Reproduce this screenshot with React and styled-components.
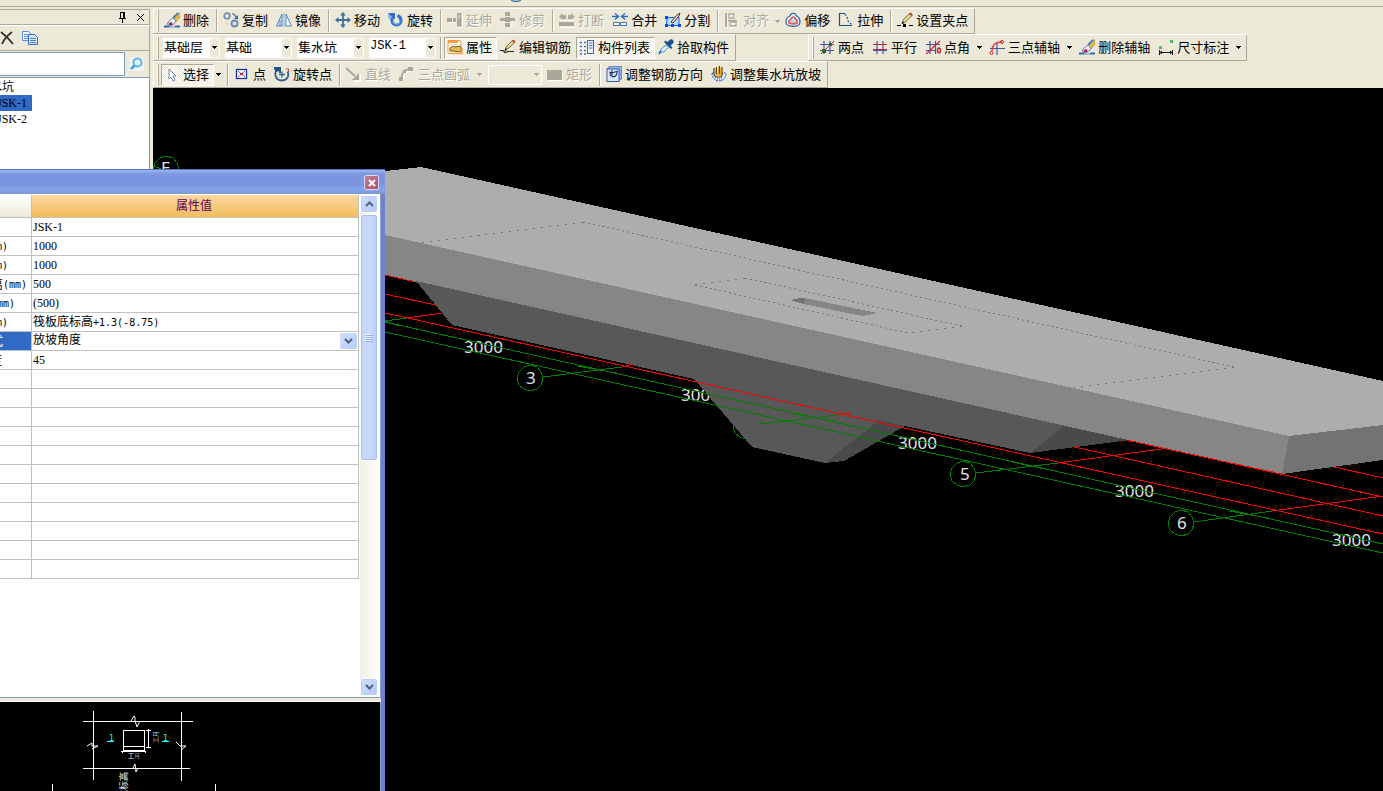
import React from "react";
import styled, { createGlobalStyle, css } from "styled-components";

const face = "#ece9d8";
const shade = "#aca899";
const fieldEdge = "#7f9db9";
const cjk = '"Noto Sans CJK SC", sans-serif';
const mixed = '"Liberation Serif", "Noto Sans CJK SC", serif';

const Base = createGlobalStyle`
  * { box-sizing: border-box; }
  body { margin: 0; background: ${face}; font: 13px/16px ${cjk}; color: #000; overflow: hidden; }
  button, select, input { font: inherit; color: inherit; margin: 0; padding: 0; border: 0; background: none; border-radius: 0; }
`;

const Screen = styled.div`
  position: relative;
  display: flex;
  flex-direction: column;
  height: 100vh;
  overflow: hidden;
`;

const TopStrip = styled.div`
  flex: none;
  display: flex;
  height: 8px;
  padding-left: 510px;
  border-bottom: 1px solid ${face};
  box-shadow: inset 0 -1px ${shade};
`;

const Workspace = styled.div`
  flex: 1;
  display: flex;
  gap: 3px;
  min-height: 0;
`;

/* ---------- docked component list ---------- */
const Dock = styled.aside`
  flex: none;
  width: 150px;
  display: flex;
  flex-direction: column;
  padding-top: 1px;
`;
const DockTitle = styled.div`
  display: flex;
  align-items: center;
  justify-content: flex-end;
  gap: 9px;
  height: 16px;
  padding-right: 4px;
  border: 1px solid ${shade};
  border-left: 0;
`;
const DockTools = styled.div`
  display: flex;
  align-items: center;
  gap: 8px;
  height: 26px;
  border-top: 1px solid #fff;
  border-bottom: 1px solid ${shade};
  border-right: 1px solid ${shade};
`;
const SearchRow = styled.form`
  display: flex;
  align-items: center;
  gap: 4px;
  height: 26px;
  border-right: 1px solid ${shade};
`;
const SearchInput = styled.input`
  width: 125px;
  height: 24px;
  background: #fff;
  border: 1px solid ${fieldEdge};
  border-left: 0;
  outline: 0;
`;
const IconButton = styled.button`
  display: flex;
  align-items: center;
  justify-content: center;
  flex: none;
`;
const Tree = styled.ul`
  flex: 1;
  margin: 0;
  padding: 1px 0 0;
  list-style: none;
  background: #fff;
  border: 1px solid ${fieldEdge};
  border-left: 0;
  font: 12px/16px ${mixed};
`;
const TreeItem = styled.li`
  display: flex;
  justify-content: flex-end;
  width: ${(p) => p.$w}px;
  height: 16px;
  padding-right: ${(p) => p.$pad || 0}px;
  overflow: hidden;
  white-space: nowrap;
  background: ${(p) => (p.$on ? "#316ac5" : "none")};
`;

/* ---------- toolbars ---------- */
const Main = styled.main`
  flex: 1;
  min-width: 0;
  display: flex;
  flex-direction: column;
`;
const BarRow = styled.div`
  flex: none;
  display: flex;
  gap: 72px;
  height: ${(p) => p.$h || 27}px;
`;
const Bar = styled.div`
  display: flex;
  align-items: center;
  flex: none;
  padding: 0 1px 0 3px;
  border: 1px solid;
  border-color: #fff ${shade} ${shade} #fff;
`;
const Grip = styled.span`
  width: 2px;
  height: 22px;
  margin-right: 2px;
  background: linear-gradient(90deg, #fff 50%, ${shade} 50%);
`;
const Rule = styled.span`
  width: 6px;
  height: 22px;
  background: linear-gradient(90deg, transparent 2px, ${shade} 2px, ${shade} 3px, #fff 3px, #fff 4px, transparent 4px);
`;
const ToolButton = styled.button`
  display: flex;
  align-items: center;
  gap: 3px;
  height: 22px;
  padding: 0 4px 2px 2px;
  border: 1px solid transparent;
  white-space: nowrap;
  ${(p) =>
    p.$pressed &&
    css`
      border-color: ${shade} #fff #fff ${shade};
      background: repeating-conic-gradient(#fff 0 25%, ${face} 0 50%) 0 0 / 2px 2px;
    `}
  &:disabled {
    color: ${shade};
    text-shadow: 1px 1px #fff;
  }
`;
const DropButton = styled.button`
  display: flex;
  align-items: center;
  justify-content: center;
  width: ${(p) => (p.$tight ? 8 : 11)}px;
  height: 22px;
  padding-right: 2px;
  color: ${(p) => (p.disabled ? shade : "#000")};
`;
const Combos = styled.div`
  display: flex;
  gap: 5px;
  padding: 0 2px;
`;
const ComboBox = styled.div`
  display: flex;
  align-items: center;
  width: ${(p) => p.$w}px;
  height: 20px;
  border: 1px solid #fff;
  background: ${face};
  color: ${(p) => (p.$empty ? shade : "#000")};
  svg { margin: 0 2px; }
`;
const ComboSelect = styled.select`
  flex: 1;
  min-width: 0;
  height: 18px;
  padding: 0 0 4px;
  appearance: none;
  outline: 0;
  opacity: 1;
  background: ${(p) => (p.disabled ? face : "#fff")};
  ${(p) => p.$latin && css`font: 12px "Liberation Mono", monospace;`}
`;
const Glyph = styled.svg.attrs({ width: 16, height: 16, viewBox: "0 0 16 16", "aria-hidden": true, fill: "none" })`
  flex: none;
`;
const Canvas = styled.div`
  flex: 1;
  min-height: 0;
  background: #000;
  svg { display: block; width: 100%; height: 100%; }
`;

/* ---------- property window ---------- */
const PropertyWindow = styled.section`
  position: absolute;
  left: 0;
  top: 169px;
  bottom: 0;
  width: 385px;
  display: flex;
  flex-direction: column;
  background: #fff;
  border-right: 4px solid #6f7fd8;
  box-shadow: inset -1px 0 #8aa3c4;
`;
const WindowTitle = styled.header`
  flex: none;
  display: flex;
  align-items: center;
  justify-content: flex-end;
  height: 25px;
  margin-right: -4px;
  padding: 2px 6px 0 0;
  border-top: 1px solid #5570c8;
  border-bottom: 1px solid ${fieldEdge};
  background: linear-gradient(#9ab8f0, #7c98e0 4px, #7a94df 14px, #84a6ec 20px, #7d9ae0);
`;
const CloseButton = styled.button`
  display: flex;
  align-items: center;
  justify-content: center;
  width: 15px;
  height: 15px;
  border: 1px solid #d8d8f0;
  border-radius: 2px;
  background: linear-gradient(135deg, #c08098, #a8526a);
`;
const Sheet = styled.div`
  flex: 1;
  min-height: 0;
  display: flex;
  justify-content: space-between;
  padding: 1px 3px 1px 0;
  border-bottom: 1px solid ${fieldEdge};
`;
const Grid = styled.table`
  align-self: flex-start;
  width: 359px;
  table-layout: fixed;
  border-collapse: separate;
  border-spacing: 0;
  font: 12px/16px ${mixed};
`;
const NameHead = styled.th`
  width: 32px;
  height: 23px;
  padding: 0;
  background: linear-gradient(#fff, ${face});
  border: solid #c0c0c0;
  border-width: 0 1px 1px 0;
`;
const ValueHead = styled.th`
  height: 23px;
  padding: 0 2px 0 0;
  font-weight: 400;
  color: #5a0060;
  background: linear-gradient(#fad79f, #f2bc5c);
  border: solid #c0c0c0;
  border-width: 0 1px 1px 0;
`;
const Cell = styled.td`
  height: 19px;
  padding: 0 0 0 1px;
  border: solid #c0c0c0;
  border-width: 0 1px 1px 0;
  white-space: nowrap;
`;
const NameCell = styled(Cell)`
  padding: 0;
  background: ${(p) => (p.$on ? "#316ac5" : "#fff")};
  color: ${(p) => (p.$on ? "#fff" : "#000")};
`;
const NameText = styled.span`
  display: flex;
  justify-content: flex-end;
  width: ${(p) => p.$w}px;
  height: 18px;
  padding-top: 2px;
  overflow: hidden;
`;
const Fixed = styled.span`
  font: 10px/16px "DejaVu Sans Mono", monospace;
`;
const ValueSelect = styled.div`
  display: flex;
  align-items: center;
  height: 18px;
  padding-right: 1px;
  select { flex: 1; height: 18px; appearance: none; outline: 0; padding-bottom: 2px; }
`;
const ArrowFace = styled.span`
  display: flex;
  align-items: center;
  justify-content: center;
  flex: none;
  width: 17px;
  height: 16px;
  border-radius: 2px;
  background: linear-gradient(135deg, #d3e0fd, #b4cbfa);
`;
const ScrollBar = styled.div`
  display: flex;
  flex-direction: column;
  width: 18px;
  background: linear-gradient(90deg, #f0eee6, #fefefb);
`;
const ScrollButton = styled.button`
  display: flex;
  align-items: center;
  justify-content: center;
  height: 18px;
  border: 1px solid #fff;
  border-radius: 3px;
  background: linear-gradient(135deg, #d0defd, #b2c9fa);
  box-shadow: inset 0 0 0 1px #bccdf5;
`;
const Thumb = styled.div`
  display: flex;
  align-items: center;
  justify-content: center;
  height: 247px;
  margin: 1px 0 auto;
  border: 1px solid #fff;
  border-radius: 3px;
  background: linear-gradient(90deg, #c6d6fc, #cadafe 60%, #b6cdf9);
  box-shadow: inset 0 0 0 1px #a8bef2;
`;
const Splitter = styled.div`
  flex: none;
  height: 4px;
  background: ${face};
  border-bottom: 1px solid #fff;
`;
const Preview = styled.div`
  flex: none;
  height: 89px;
  margin-right: 1px;
  background: #000;
  svg { display: block; }
`;

/* ---------- icons ---------- */
const Down = () => (
  <svg width="5" height="3" viewBox="0 0 5 3" aria-hidden="true" shapeRendering="crispEdges">
    <path d="M0 0h5v1H4v1H3v1H2V2H1V1H0z" fill="currentColor" />
  </svg>
);
const Chevron = ({ up }) => (
  <svg width="9" height="6" viewBox="0 0 9 6" aria-hidden="true">
    <path d={up ? "M1 5l3.5-3.5L8 5" : "M1 1l3.5 3.5L8 1"} fill="none" stroke="#4d6185" strokeWidth="2" />
  </svg>
);
const brush = (
  <>
    <path d="M0 14.500h5M11 14.500h5" stroke="#2f6aa8" strokeWidth="2" />
    <path d="M5 15h6" stroke="#8fb0d4" strokeWidth="1.500" />
    <path d="M9 7l5-6h2v4l-4 5z" fill="#eab640" stroke="#9a8a5a" strokeWidth=".6" />
    <path d="M9 6l5-5" stroke="#4f7fb8" strokeWidth="1.800" />
    <path d="M5 9l4-3 3 3-2 3-4 2-3-2z" fill="#eef3fa" stroke="#54749c" strokeWidth=".8" />
    <path d="M4.500 11l3-1 1.500 2.500-3.500 1.500z" fill="#a8286c" />
  </>
);
const pencil = (
  <>
    <path d="M0 11.500h3l2 2 3-1h6" stroke="#222" strokeWidth="1.200" />
    <path d="M5 11l2-4 6-6 2 2-6 6z" fill="#ecd58a" stroke="#5a4a2a" strokeWidth=".8" />
    <path d="M12 2l1.500-1.500 2 2L14 4z" fill="#c84030" />
    <path d="M4.500 12l1-3 2 2z" fill="#222" />
  </>
);
const icons = {
  erase: brush,
  copy: (
    <>
      <circle cx="4" cy="4" r="2.800" stroke="#7288ac" strokeWidth="1.800" fill="#f2f5fb" />
      <circle cx="11.500" cy="11.500" r="3" stroke="#7288ac" strokeWidth="1.800" fill="#d5e0f2" />
      <path d="M9.500 1.500l2 1.500 2 2.500" stroke="#2f6aa0" strokeWidth="1.200" />
      <path d="M15 3v4h-4z" fill="#2f6aa0" />
      <path d="M3 10.500l2 2" stroke="#b5bccb" />
    </>
  ),
  mirror: (
    <>
      <path d="M6 2v12H.5z" stroke="#4d86bd" fill="#d8e8f6" />
      <path d="M10 2v12h5.500z" stroke="#4d86bd" fill="#f6fafd" />
      <path d="M8 1v14" stroke="#8fb2d4" />
      <path d="M4 8v6" stroke="#4d86bd" />
    </>
  ),
  move: (
    <>
      <path d="M8 2v12M2 8h12" stroke="#3f6f9f" strokeWidth="1.800" />
      <path d="M8 0l3 3.500H5zM8 16l-3-3.500h6zM0 8l3.500-3v6zM16 8l-3.500-3v6z" fill="#3f6f9f" />
    </>
  ),
  rotate: (
    <>
      <path d="M4 5v3.500a4.500 4.500 0 0 0 9 0c0-2-1.200-4-3.500-5" stroke="#3478d0" strokeWidth="3.200" />
      <path d="M5 9c1 4 6 4 7 0" stroke="#7fb4f0" strokeWidth="1.200" />
      <path d="M0 6V1h7v6z" fill="#2c6cc4" />
      <path d="M0 6V1l5 5z" fill="#8ab8ee" />
    </>
  ),
  extend: (
    <>
      <path d="M1 10.500h8M10 15.500h5.500V2" stroke="#fff" />
      <path d="M0 6h5v4H0zM6 6h3v4H6z" fill="#aca899" />
      <path d="M10 1h4.500v13.500H10z" fill="#aca899" />
      <path d="M12 3v4" stroke="#ece9d8" />
    </>
  ),
  trim: (
    <>
      <path d="M6 16.500h5V12h5" stroke="#fff" />
      <path d="M5 0h5v4h-5zM0 6h5V5h5v1h5v3h-5v1H5V9H0zM5 11h5v4H5z" fill="#aca899" />
    </>
  ),
  breakIt: (
    <>
      <path d="M1 15.500h15V11M2 8.500h5M10 8.500h5" stroke="#fff" />
      <path d="M0 4.500L3.500 1v2H7v4H3.500V8zM16 4.500L12.500 1v2H9v4h3.500V8zM0 10h15v4H0z" fill="#aca899" />
    </>
  ),
  merge: (
    <>
      <path d="M0 4.500h6M16 4.500h-6M3 1.500l3.500 3L3 7.500M13 1.500l-3.500 3 3.500 3" stroke="#2b6cc4" strokeWidth="1.400" />
      <path d="M1.500 10.500h6v3h-6zM8.500 10.500h6v3h-6z" fill="#fff" stroke="#3f6fb7" />
    </>
  ),
  split: (
    <>
      <path d="M2 5.500h12v8H1.500z" fill="#b4dcff" stroke="#1a63e8" />
      <path d="M0 4h3v3H0zM0 12h3v3H0zM13 12h3v3h-3zM6 12h3v3H6z" fill="#1546e0" />
      <path d="M6 10l6-7 3-2-1 3-6 7z" fill="#f0e2c0" stroke="#5a2b20" />
    </>
  ),
  align: (
    <>
      <path d="M2 1v14M5 2h5v3H5zM5 7h8M5 10.500h7v4H5z" stroke="#fff" transform="translate(1 1)" />
      <path d="M2 1v14" stroke="#aca899" strokeWidth="2" />
      <path d="M5 2h5v4H5zM4 8.500h9M6 10h6v4H6z" stroke="#aca899" strokeWidth="1.300" />
    </>
  ),
  offset: (
    <>
      <path d="M5 4c1-4 6-3 6.500 0 3 1 4 5 3 8-2 3-11 3-13 0C0 9 2 5 5 4z" fill="#f8fcff" stroke="#2d66a0" strokeWidth="1.300" />
      <path d="M6 7c1-3 4-2 4.500 0 2 1 2 2 1.500 4-1 1-7 1-8 0-.5-2 0-3 2-4z" fill="#c4dcf4" stroke="#e0625a" strokeWidth="1.800" />
    </>
  ),
  stretch: (
    <>
      <path d="M7 1.500H1.500v12H14" stroke="#1b5580" strokeWidth="1.200" />
      <path d="M7 2l2 3 1 4 4 4" stroke="#1b5580" strokeWidth="1.200" strokeDasharray="2 1.500" />
    </>
  ),
  gripPoint: (
    <>
      <path d="M5 12l1-4 7-7 2.500 2-7 7z" fill="#ecd58a" stroke="#5a5a4a" strokeWidth=".8" />
      <path d="M12 2l1.500-1.500 2 2L14 4z" fill="#c84030" />
      <path d="M5 12l.5-3 2 2z" fill="#222" />
      <path d="M0 13.500h4M12 13.500h4" stroke="#000" />
      <path d="M6 12h3v3H6z" fill="#000" />
    </>
  ),
  property: (
    <>
      <rect x="1" y="1.500" width="13" height="13" rx="1" fill="#fff9ec" stroke="#ee9a3c" />
      <path d="M1 1h10v3H1z" fill="#f59d40" />
      <path d="M4 5.500h6" stroke="#c8d4e8" />
      <path d="M3 9c2-2 3-2 5-1l5-1 2 4-3 2-6-1-3 0z" fill="#e0b84e" stroke="#6b5524" strokeWidth=".9" />
      <path d="M3 14.500h12V9" stroke="#f0a24c" strokeWidth="1.500" />
    </>
  ),
  rebar: pencil,
  list: (
    <>
      <path d="M1 3.500h2M1 7.500h2M1 11.500h2M1 15h2M5 3.500h2M5 7.500h2M5 11.500h2M5 15h2" stroke="#3a6fbe" strokeWidth="1.500" />
      <rect x="8.500" y="1.500" width="6" height="13" fill="#eaf2ff" stroke="#4468a8" />
      <path d="M10 4h3.500M10 6.500h3.500M10 9h3.500" stroke="#4468a8" />
    </>
  ),
  pick: (
    <>
      <path d="M2 13l1-3 5-4 2.500 2.500L6 13z" fill="#d4ecfa" stroke="#5a9cc4" />
      <path d="M6 3l7 7 1.500-1.500-2-2 2.500-2C17 2 14-1 11.500 1l-2 2-2-1.500z" fill="#1d4f92" />
      <path d="M1 15l2-3" stroke="#2d77bb" strokeWidth="2" />
    </>
  ),
  twoPoint: (
    <>
      <path d="M5 2v13M11 2v13M1 5.500h14M1 11.500h14" stroke="#4a52a4" strokeWidth="1.200" />
      <path d="M2 15L15 2" stroke="#c8202c" />
      <path d="M3 10h4v4H3zM10 4h3v3h-3z" fill="#2d6a22" />
    </>
  ),
  parallel: (
    <>
      <path d="M5 2v13M11 2v13M1 11.500h14" stroke="#4a52a4" strokeWidth="1.200" />
      <path d="M1 5.500h14M1 10.500h14" stroke="#d02430" strokeWidth="1.200" />
    </>
  ),
  angle: (
    <>
      <path d="M5 2v13M10.500 2v13M1 5.500h14M1 11.500h10" stroke="#4a52a4" strokeWidth="1.200" />
      <path d="M1 15L15 2" stroke="#d02430" strokeWidth="1.200" />
      <ellipse cx="14" cy="11.500" rx="1.500" ry="2.500" stroke="#d02430" strokeWidth="1.500" />
    </>
  ),
  arcAxis: (
    <>
      <path d="M8 3v13M1 9.500h15" stroke="#4a52a4" strokeWidth="1.200" />
      <path d="M3 12C3 6 6 3 13 3" stroke="#e04048" strokeWidth="1.500" />
      <circle cx="2.500" cy="14" r="1.500" stroke="#d02430" />
      <circle cx="13" cy="3" r="1.500" stroke="#d02430" />
    </>
  ),
  dimension: (
    <>
      <path d="M1 7h3v3H1zM12 1h3v3h-3z" fill="#4dbb58" />
      <path d="M1.500 11v5M14.500 11v5M2 13.500h12M4 12l-2 1.500L4 15M12 12l2 1.500-2 1.500" stroke="#111" />
    </>
  ),
  cursor: <path d="M5 3v10l2-2 2 4 2-1-2-4h3z" fill="#fff" stroke="#6c88ae" />,
  point: (
    <>
      <rect x="2.500" y="3.500" width="10" height="9" fill="#fff" stroke="#1c2f9c" strokeWidth="1.300" />
      <path d="M4 5l7 6M11 5l-7 6" stroke="#5f73c8" />
      <path d="M6 7h3v2H6z" fill="#d8202c" />
    </>
  ),
  rotatePoint: (
    <>
      <path d="M3 3.500C0 7 1 14 7.500 14.500c6 0 8-5 6-9" stroke="#345f8e" strokeWidth="1.800" />
      <path d="M8 5.500v6M5 8.500h6" stroke="#345f8e" strokeWidth="1.300" />
      <path d="M0 1h7v6H5V5L2 6 0 3z" fill="#22527e" />
      <path d="M12 3h2.500v3" stroke="#d04040" />
    </>
  ),
  line: (
    <>
      <path d="M2 3l9 9M14.500 8v7H8" stroke="#fff" strokeWidth="1.500" />
      <path d="M0 2l9 8" stroke="#aca899" strokeWidth="2.200" />
      <path d="M13 7v7H6z" fill="#aca899" />
    </>
  ),
  arc: (
    <>
      <path d="M4 15C3 8 7 5 13 4.500" stroke="#fff" strokeWidth="2" />
      <path d="M2.500 14C2 8 5 3 12 3" stroke="#aca899" strokeWidth="2" />
      <path d="M0 11h4v4H0zM9 1h5v4H9zM4 4h3v3H4z" fill="#aca899" />
    </>
  ),
  rect: (
    <>
      <path d="M1 14.500h15V5" stroke="#fff" />
      <path d="M0 4h15v10H0z" fill="#aca899" />
    </>
  ),
  direction: (
    <>
      <path d="M1 3l3-3h12v12l-3 3z" fill="#8fb0e4" stroke="#3b5f9c" strokeWidth=".8" />
      <rect x="1" y="3" width="12" height="12.500" fill="#dce9fa" stroke="#3b5fa5" />
      <path d="M3 6l3 1 6-2M6 4v6c2 2 5 0 5-4M6 10c-3 0-2-3 0-3" stroke="#1d3564" strokeWidth="1.100" />
    </>
  ),
  slope: (
    <>
      <path d="M1 7c0 5 3 8 7 8s7-3 7-8z" fill="#dcecff" stroke="#2d63c0" strokeDasharray="2 1" />
      <path d="M4 12h7M6 14h5" stroke="#2d63c0" strokeDasharray="1 1" />
      <path d="M3 2v7l2 2h5l1-2V1M5.500 1v7M8.500 0v8" stroke="#5c3e12" strokeWidth="1.200" />
      <path d="M4 3h1v6H4zM7 1h1v7H7zM9 2h1v6H9zM4 8h6v2H5z" fill="#f0b428" />
    </>
  ),
};
const Icon = ({ name }) => <Glyph>{icons[name]}</Glyph>;

const Tool = ({ icon, children, pressed, disabled, menu, tight }) => (
  <>
    <ToolButton type="button" $pressed={pressed} disabled={disabled} aria-pressed={pressed}>
      <Icon name={icon} />
      {children}
    </ToolButton>
    {menu && (
      <DropButton type="button" aria-label={`${children} ▾`} disabled={disabled} $tight={tight}>
        <Down />
      </DropButton>
    )}
  </>
);
const Combo = ({ label, value, w, latin }) => (
  <ComboBox $w={w} $empty={!value}>
    <ComboSelect aria-label={label} $latin={latin} disabled={!value}>
      <option>{value}</option>
    </ComboSelect>
    <Down />
  </ComboBox>
);

/* ---------- 3D view ---------- */
const SceneText = styled.text`
  font: 17px "Noto Sans", sans-serif;
  fill: #e4e4e4;
`;
const bubble = (cx, cy, r = 13) =>
  Array.from({ length: 12 }, (_, i) => {
    const a = (i * Math.PI) / 6;
    return `${Math.round(cx + r * Math.cos(a))},${Math.round(cy + r * Math.sin(a))}`;
  }).join(" ");

const Scene = () => (
  <svg viewBox="153 88 1230 703" preserveAspectRatio="xMinYMin slice" role="img" aria-label="JSK-1" fill="none">
    <SceneText x="161" y="174">E</SceneText>
    <SceneText x="464" y="353">3000</SceneText>
    <SceneText x="681" y="401">3000</SceneText>
    <SceneText x="898" y="449">3000</SceneText>
    <SceneText x="1115" y="497">3000</SceneText>
    <SceneText x="1332" y="546">3000</SceneText>
    <SceneText x="526" y="384">3</SceneText>
    <SceneText x="960" y="480">5</SceneText>
    <SceneText x="1177" y="529">6</SceneText>
    <g shapeRendering="crispEdges">
      <g stroke="#008000">
        <polygon points={bubble(166, 169)} />
        <polygon points={bubble(530, 378)} />
        <polygon points={bubble(746, 426)} />
        <polygon points={bubble(963, 474)} />
        <polygon points={bubble(1181, 523)} />
        <path d="M153 166L164 170" />
      </g>
      <path d="M385 294L440 306M1070 446L1383 516M385 275L1383 497M1330 466L1383 478" stroke="#f00" />
      <polygon points="416,281 452,325 694,379 752,447 825,463 879,420 905,426 1030,453 1066,426" fill="#585858" />
      <polygon points="879,420 905,426 844,461 825,463" fill="#4a4a4a" />
      <polygon points="1065,425 1130,440 1030,453" fill="#4a4a4a" />
      <polygon points="385,171 421,167 1383,381 1383,425 1289,436 385,236" fill="#adadad" />
      <polygon points="385,235 1289,436 1282,474 385,275" fill="#868686" />
      <polygon points="416,281 1066,426 1066,427 416,283" fill="#585858" />
      <polygon points="1289,436 1383,425 1383,460 1282,474" fill="#737373" />
      <polygon points="805,298 877,313 862,316 804,304" fill="#868686" />
      <polygon points="790,300 800,298 805,298 804,304" fill="#737373" />
      <g stroke="#777">
        <path d="M422 243L583 222M1234 367L1074 388M695 285L745 278M962 326L908 333" strokeDasharray="2 6" />
        <path d="M583 222L1234 367M745 278L962 326M695 285L908 333" strokeDasharray="2 3" />
      </g>
      <path d="M385 275L416 282M1130 441L1282 474" stroke="#f00" strokeDasharray="5 3" />
      <path d="M385 313L1383 534M407 318L442 313M622 367L633 364M838 415L851 413M1058 463L1168 448M1272 511L1383 496" stroke="#f00" />
      <path
        d="M385 322L1383 544M385 332L1383 553M385 321L407 318M543 377L622 367M760 424L838 415M976 473L1058 463M1194 522L1272 511M385 321L399 326M577 366L616 373M795 414L833 421M1012 462L1050 470M1229 511L1268 518"
        stroke="#008000"
      />
    </g>
  </svg>
);

/* ---------- section drawing under the grid ---------- */
const MarkText = styled.text`
  font: 8px "DejaVu Sans Mono", monospace;
  fill: #2ff;
`;
const NoteText = styled.text`
  font: ${(p) => p.$size}px ${cjk};
  fill: ${(p) => p.$tone || "#fff"};
`;
const Section = () => (
  <svg width="380" height="89" viewBox="0 702 380 89" role="img" aria-label="1-1" fill="none">
    <g stroke="#fff" shapeRendering="crispEdges">
      <path d="M93.500 711v69M181.500 712v69M83 721.500h110M83 768.500h107M52.500 784v7M215.500 784v7" />
      <path d="M123.500 730.500h21v20h-21zM123 746.500h22M121 751.500h25M148.500 729v19M146 730.500h5M146 747.500h5" />
    </g>
    <path
      d="M131 721l3-5 1 1v4l2 6 3-6M87 746l5-3v3h6l-6 3M176 742l4 4h6l-5 4M133 768l2-4 1 8 2-4M122 753l3-3M143 750l3 3"
      stroke="#fff"
    />
    <MarkText x="109" y="741">1</MarkText>
    <MarkText x="163" y="741">1</MarkText>
    <path d="M107 741.500h7M162 741.500h7" stroke="#2ff" shapeRendering="crispEdges" />
    <NoteText $size={6} x="128" y="758">工</NoteText>
    <NoteText $size={6} $tone="#999" x="134" y="758">月</NoteText>
    <NoteText $size={6} $tone="#ccc" transform="translate(158 743) rotate(-90)">工月</NoteText>
    <NoteText $size={9} transform="translate(127 799) rotate(-90)">底标高</NoteText>
  </svg>
);

const rows = [
  ["名称", 0, "JSK-1"],
  ["长度(mm)", 8, "1000"],
  ["宽度(mm)", 8, "1000"],
  ["坑底出边距离(mm)", 27, "500"],
  ["坑底板厚度(mm)", 15, "(500)"],
  ["坑板顶标高(m)", 8, "筏板底标高", "+1.3(-8.75)"],
  ["放坡输入方式", 3, "放坡角度"],
  ["放坡角度", 2, "45"],
];

const NameLabel = ({ text }) => {
  const cut = text.indexOf("(");
  return cut < 0 ? text : <>{text.slice(0, cut)}<Fixed>{text.slice(cut)}</Fixed></>;
};

export default function App() {
  return (
    <Screen>
      <Base />
      <TopStrip>
        <svg width="12" height="3" viewBox="0 0 12 3" aria-hidden="true">
          <path d="M1 0c2 2 8 2 10 0" fill="#9cc0ea" stroke="#2d5c94" />
        </svg>
      </TopStrip>
      <Workspace>
        <Dock>
          <DockTitle>
            <IconButton type="button" aria-label="固定">
              <svg width="9" height="11" viewBox="0 0 9 11" fill="none" shapeRendering="crispEdges" aria-hidden="true">
                <path d="M2.500 6V.5h4V6M5.500 1v5M1 6.500h7M4.500 7v4" stroke="#000" />
              </svg>
            </IconButton>
            <IconButton type="button" aria-label="关闭">
              <svg width="9" height="9" viewBox="0 0 9 9" aria-hidden="true">
                <path d="M1 1l7 7M8 1L1 8" stroke="#000" />
              </svg>
            </IconButton>
          </DockTitle>
          <DockTools>
            <IconButton type="button" aria-label="删除构件">
              <svg width="14" height="14" viewBox="0 0 14 14" fill="none" aria-hidden="true">
                <path d="M1 1c4 3 8 7 12 12M12 1C8 4 4 8 2 13" stroke="#333" strokeWidth="1.800" />
              </svg>
            </IconButton>
            <IconButton type="button" aria-label="复制构件">
              <svg width="16" height="14" viewBox="0 0 16 14" fill="none" aria-hidden="true">
                <path d="M.5.5h6l3 3v6h-9z" fill="#eef4ff" stroke="#5f8fe0" />
                <path d="M2 3.500h4M2 5.500h4M2 7.500h4" stroke="#5f8fe0" />
                <path d="M6.500 3.500h6l3 3v7h-9z" fill="#dce8ff" stroke="#3468c8" />
                <path d="M8 7.500h6M8 9.500h6M8 11.500h6" stroke="#4a7cd8" />
              </svg>
            </IconButton>
          </DockTools>
          <SearchRow>
            <SearchInput type="text" aria-label="搜索构件" />
            <IconButton type="button" aria-label="搜索">
              <svg width="15" height="14" viewBox="0 0 15 14" fill="none" aria-hidden="true">
                <path d="M0 0h15v14H0z" fill="#eef2f4" />
                <circle cx="8.500" cy="5.500" r="4" fill="#e8f6ff" stroke="#5ab4ec" strokeWidth="2" />
                <path d="M5.500 8.500L2 12" stroke="#3f9fe0" strokeWidth="2.500" />
              </svg>
            </IconButton>
          </SearchRow>
          <Tree>
            <TreeItem $w={14}>集水坑</TreeItem>
            <TreeItem $w={32} $pad={5} $on>JSK-1</TreeItem>
            <TreeItem $w={32} $pad={5}>JSK-2</TreeItem>
          </Tree>
        </Dock>
        <Main>
          <BarRow $h={26}>
            <Bar>
              <Grip />
              <Tool icon="erase">删除</Tool>
              <Rule />
              <Tool icon="copy">复制</Tool>
              <Tool icon="mirror">镜像</Tool>
              <Rule />
              <Tool icon="move">移动</Tool>
              <Tool icon="rotate">旋转</Tool>
              <Rule />
              <Tool icon="extend" disabled>延伸</Tool>
              <Tool icon="trim" disabled>修剪</Tool>
              <Rule />
              <Tool icon="breakIt" disabled>打断</Tool>
              <Tool icon="merge">合并</Tool>
              <Tool icon="split">分割</Tool>
              <Rule />
              <Tool icon="align" disabled menu tight>对齐</Tool>
              <Tool icon="offset">偏移</Tool>
              <Tool icon="stretch">拉伸</Tool>
              <Rule />
              <Tool icon="gripPoint">设置夹点</Tool>
            </Bar>
          </BarRow>
          <BarRow>
            <Bar>
              <Grip />
              <Combos>
                <Combo label="楼层" value="基础层" w={57} />
                <Combo label="构件类别" value="基础" w={67} />
                <Combo label="构件类型" value="集水坑" w={67} />
                <Combo label="构件" value="JSK-1" w={67} latin />
              </Combos>
              <Rule />
              <Tool icon="property" pressed>属性</Tool>
              <Tool icon="rebar">编辑钢筋</Tool>
              <Tool icon="list" pressed>构件列表</Tool>
              <Tool icon="pick">拾取构件</Tool>
            </Bar>
            <Bar>
              <Grip />
              <Tool icon="twoPoint">两点</Tool>
              <Tool icon="parallel">平行</Tool>
              <Tool icon="angle" menu>点角</Tool>
              <Tool icon="arcAxis" menu>三点辅轴</Tool>
              <Tool icon="erase">删除辅轴</Tool>
              <Tool icon="dimension" menu>尺寸标注</Tool>
            </Bar>
          </BarRow>
          <BarRow>
            <Bar>
              <Grip />
              <Tool icon="cursor" pressed menu>选择</Tool>
              <Rule />
              <Tool icon="point">点</Tool>
              <Tool icon="rotatePoint">旋转点</Tool>
              <Rule />
              <Tool icon="line" disabled>直线</Tool>
              <Tool icon="arc" disabled menu>三点画弧</Tool>
              <Combos>
                <Combo label="画弧方式" value="" w={54} />
              </Combos>
              <Tool icon="rect" disabled>矩形</Tool>
              <Rule />
              <Tool icon="direction">调整钢筋方向</Tool>
              <Tool icon="slope">调整集水坑放坡</Tool>
            </Bar>
          </BarRow>
          <Canvas>
            <Scene />
          </Canvas>
        </Main>
      </Workspace>

      <PropertyWindow aria-label="属性">
        <WindowTitle>
          <CloseButton type="button" aria-label="关闭">
            <svg width="8" height="8" viewBox="0 0 8 8" aria-hidden="true">
              <path d="M1 1l6 6M7 1L1 7" stroke="#fff" strokeWidth="2" />
            </svg>
          </CloseButton>
        </WindowTitle>
        <Sheet>
          <Grid>
            <thead>
              <tr>
                <NameHead aria-label="属性名称" />
                <ValueHead>属性值</ValueHead>
              </tr>
            </thead>
            <tbody>
              {rows.map(([name, w, value, tail], i) => (
                <tr key={i}>
                  <NameCell $on={i === 6}>
                    {w > 0 && (
                      <NameText $w={w}>
                        <NameLabel text={name} />
                      </NameText>
                    )}
                  </NameCell>
                  <Cell>
                    {i === 6 ? (
                      <ValueSelect>
                        <select aria-label={name}>
                          <option>{value}</option>
                        </select>
                        <ArrowFace>
                          <Chevron />
                        </ArrowFace>
                      </ValueSelect>
                    ) : (
                      <>
                        {value}
                        {tail && <Fixed>{tail}</Fixed>}
                      </>
                    )}
                  </Cell>
                </tr>
              ))}
              {Array.from({ length: 11 }, (_, i) => (
                <tr key={`blank${i}`}>
                  <NameCell />
                  <Cell />
                </tr>
              ))}
            </tbody>
          </Grid>
          <ScrollBar>
            <ScrollButton type="button" aria-label="向上滚动">
              <Chevron up />
            </ScrollButton>
            <Thumb>
              <svg width="8" height="8" viewBox="0 0 8 8" aria-hidden="true" shapeRendering="crispEdges">
                <path d="M0 .5h7M0 2.500h7M0 4.500h7M0 6.500h7" stroke="#eef4fe" />
                <path d="M1 1.500h7M1 3.500h7M1 5.500h7M1 7.500h7" stroke="#8cb0f8" />
              </svg>
            </Thumb>
            <ScrollButton type="button" aria-label="向下滚动">
              <Chevron />
            </ScrollButton>
          </ScrollBar>
        </Sheet>
        <Splitter />
        <Preview>
          <Section />
        </Preview>
      </PropertyWindow>
    </Screen>
  );
}
